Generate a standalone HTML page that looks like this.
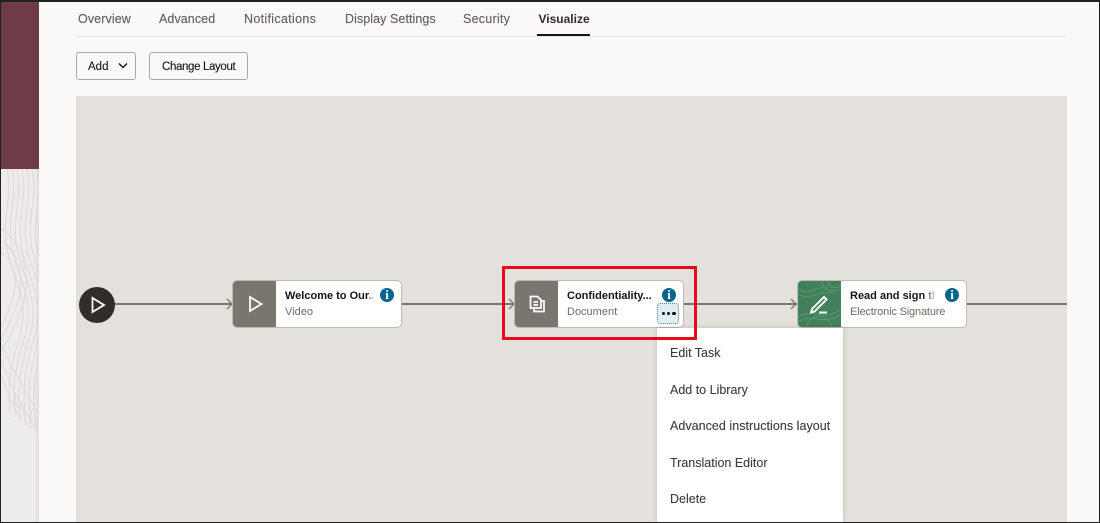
<!DOCTYPE html>
<html><head><meta charset="utf-8"><style>
*{box-sizing:border-box}
html,body{margin:0;padding:0;width:1100px;height:523px;overflow:hidden;background:#fbf9f8}
body{position:relative;font-family:"Liberation Sans",sans-serif}
.a,.a *{position:absolute}
.t{white-space:nowrap;line-height:16px}
.tab{top:11px;font-size:12.5px;color:#646260;height:16px;-webkit-text-stroke:.15px #646260}
.btn{top:52px;height:28px;border:1px solid #aaa8a3;border-radius:3px;background:#fbf9f8}
.node{top:280px;height:48px;background:#fff;border:1px solid #bdbbb6;border-radius:5px}
.ic{left:0;top:0;width:43px;height:46px;background:#7a756e;border-radius:4px 0 0 4px}
.ti{left:52px;top:7px;font-size:11px;font-weight:bold;color:#161513;overflow:hidden}
.su{left:52px;top:23px;font-size:11px;color:#6f6d69}
.info{width:14px;height:14px;border-radius:50%;background:#04668f;color:#fff;font:bold 13px/14px "Liberation Serif",serif;text-align:center}
.m{left:13px;font-size:12.5px;color:#3c3a37;white-space:nowrap;line-height:16px;-webkit-text-stroke:.1px #3c3a37}
</style></head><body>
<div class="a" style="left:0;top:0;width:1100px;height:523px">
<div style="left:1px;top:1px;width:38px;height:168px;background:#6f3b46"></div>
<div style="left:1px;top:169px;width:38px;height:353px;background:linear-gradient(90deg,#eeecea 0,#eeecea 88%,#e0ddd9 100%)"></div>
<svg style="left:1px;top:169px" width="38" height="270" viewBox="0 0 38 270" fill="none" stroke="#dddad7" stroke-width="1.1">
<defs><clipPath id="c"><path d="M0 0H38V265L0 238Z"/></clipPath>
<path id="w" d="M0 0C6 30-6 50 0 80S24 130 12 170 0 220 6 280"/></defs>
<g clip-path="url(#c)">
<use href="#w" x="6"/><use href="#w" x="11"/><use href="#w" x="16"/><use href="#w" x="21"/><use href="#w" x="26"/><use href="#w" x="31"/><use href="#w" x="36"/>
<path d="M0 60C24 75 30 110 22 135S8 170 0 182"/>
<path d="M0 72C18 82 24 110 17 132S6 158 0 170"/>
<path d="M0 84C12 90 18 110 12 128S4 150 0 158"/>
<path d="M0 205C10 235 20 250 36 285M0 190C12 225 24 240 38 265M0 175C14 205 26 225 38 245"/>
<path d="M14 225C16 255 20 220 24 250S30 222 34 245 38 232 38 232"/>
</g></svg>
<div style="left:39px;top:1px;width:1060px;height:521px;background:#fbf9f8"></div>
<div style="left:76px;top:36px;width:991px;height:1px;background:#e8e6e3"></div>
<div class="tab t" style="left:78px;letter-spacing:.1px">Overview</div>
<div class="tab t" style="left:159px;letter-spacing:.08px">Advanced</div>
<div class="tab t" style="left:244px;letter-spacing:.32px">Notifications</div>
<div class="tab t" style="left:345px;letter-spacing:.07px">Display Settings</div>
<div class="tab t" style="left:463px;letter-spacing:.25px">Security</div>
<div class="tab t" style="left:538.500px;font-weight:bold;color:#312d2a;font-size:12px;-webkit-text-stroke:0">Visualize</div>
<div style="left:537px;top:34px;width:53px;height:2px;background:#161513"></div>
<div class="btn" style="left:76px;width:60px"><span class="t" style="left:11px;top:6px;font-size:11.5px;color:#161513;-webkit-text-stroke:.1px #161513">Add</span>
<svg style="left:40px;top:9px" width="12" height="8" viewBox="0 0 12 8" fill="none" stroke="#161513" stroke-width="1.4"><path d="M2 1.500l4 4 4-4"/></svg></div>
<div class="btn" style="left:149px;width:99px"><span class="t" style="left:12px;top:6px;font-size:11.5px;color:#161513;letter-spacing:-.36px;-webkit-text-stroke:.1px #161513">Change Layout</span></div>
<div style="left:76px;top:96px;width:991px;height:426px;background:#e4e1dc"></div>
<div style="left:110px;top:303px;width:957px;height:2px;background:#7a756e"></div>
<svg style="left:0;top:0" width="1100" height="523" fill="none" stroke="#7a756e" stroke-width="1.3"><path d="M227 299l5 5-5 5M509 299l5 5-5 5M791 299l5 5-5 5"/></svg>
<div style="left:79px;top:287px;width:36px;height:36px;border-radius:50%;background:#312d2a"></div>
<svg style="left:79px;top:287px" width="36" height="36" fill="none" stroke="#fff" stroke-width="1.8"><path d="M13.500 11v14l11.500-7z"/></svg>

<div class="node" style="left:232px;width:170px"><div class="ic"></div>
<svg style="left:0;top:0" width="43" height="46" fill="none" stroke="#fff" stroke-width="1.8"><path d="M17 16v14l11.500-7z"/></svg>
<div class="ti t" style="width:88px">Welcome to Our<span style="position:static;color:#777">..</span></div><div class="su t">Video</div><div class="info" style="left:147px;top:7px">i</div></div>

<div class="node" style="left:514px;width:170px"><div class="ic"></div>
<svg style="left:0;top:0" width="43" height="46" fill="none" stroke="#fff" stroke-width="1.7"><path d="M15.500 15.500h7l3.500 3.500v8h-10.500zM18.500 21h4.500M18.500 24h4.500M26 20h3v10.500h-10v-3.500"/></svg>
<div class="ti t" style="width:88px">Confidentiality...</div><div class="su t">Document</div><div class="info" style="left:147px;top:7px">i</div>
<div style="left:142px;top:22px;width:22px;height:21px;background:#e0edf1;border:1px dotted #4f8aa3;border-radius:3px"></div>
<div style="left:146.500px;top:30.500px;width:3.500px;height:3.500px;border-radius:50%;background:#161513"></div>
<div style="left:151.500px;top:30.500px;width:3.500px;height:3.500px;border-radius:50%;background:#161513"></div>
<div style="left:157px;top:30.500px;width:3.500px;height:3.500px;border-radius:50%;background:#161513"></div></div>

<div class="node" style="left:797px;width:170px"><div class="ic" style="background:#41805a"></div>
<svg style="left:0;top:0" width="43" height="46" fill="none"><path d="M0 8C12 16 18 4 30 7M0 13C12 21 18 9 36 12M0 36C14 26 26 42 43 28M0 41C14 31 26 46 43 33M8 46C14 30 30 34 34 46M24 0C24 10 36 12 43 8M30 0C30 8 38 8 43 4" stroke="#5a9672"/><path d="M14 28l-1 3.500 3.500-1 12-12-2.500-2.500zM21 31.500h8" stroke="#fff" stroke-width="1.900"/></svg>
<div class="ti t" style="width:87px">Read and sign the</div><div style="left:125px;top:7px;width:14px;height:16px;background:linear-gradient(90deg,rgba(255,255,255,0),#fff)"></div><div class="su t" style="letter-spacing:-.16px">Electronic Signature</div><div class="info" style="left:147px;top:7px">i</div></div>

<div style="left:657px;top:328px;width:186px;height:194px;background:#fff;box-shadow:0 0 5px rgba(0,0,0,.18)"></div>
<div style="left:657px;top:328px;width:186px;height:194px">
<div class="m" style="top:17px">Edit Task</div>
<div class="m" style="top:54px">Add to Library</div>
<div class="m" style="top:90px;letter-spacing:.04px">Advanced instructions layout</div>
<div class="m" style="top:127px">Translation Editor</div>
<div class="m" style="top:163px">Delete</div></div>
<div style="left:502px;top:266px;width:195px;height:74px;border:3px solid #e8091e"></div>
<div style="left:0;top:0;width:1100px;height:523px;border:1px solid #222;border-top-width:2px"></div>
</div>
</body></html>
